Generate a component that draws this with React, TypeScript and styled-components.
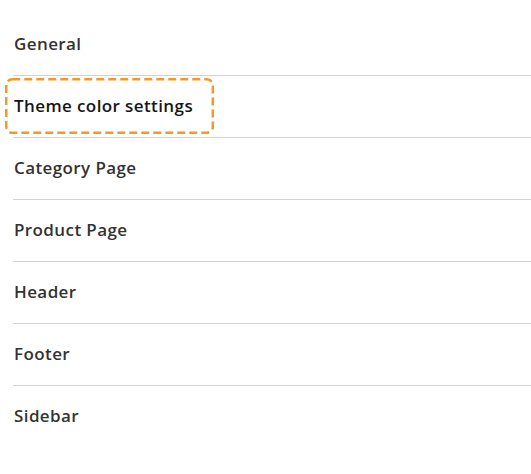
import { createGlobalStyle } from "styled-components";
import styled from "styled-components";

const GlobalStyle = createGlobalStyle`
  body {
    margin: 0;
    background: #fff;
    font-family: "Open Sans", "Noto Sans", sans-serif;
  }
`;

const Menu = styled.nav`
  padding: 14px 0 0 13px;
  width: 531px;
  box-sizing: border-box;
`;

const Row = styled.div<{ $last?: boolean }>`
  display: flex;
  align-items: center;
  height: 59px;
  padding-bottom: 2px;
  border-bottom: 1px solid ${(p) => (p.$last ? "transparent" : "#d3d3d3")};
`;

const Label = styled.span<{ $focused?: boolean }>`
  position: relative;
  font-size: 17px;
  font-weight: 600;
  letter-spacing: 0.4px;
  line-height: 24px;
  color: ${(p) => (p.$focused ? "#161616" : "#333")};
  margin-left: 1px;
  ${(p) =>
    p.$focused &&
    `
    margin-left: -8px;
    padding: 16px 21px 16px 9px;
  `}
`;

// dashed focus ring drawn over the label
const FocusRing = styled.svg`
  position: absolute;
  inset: 0;
  width: 100%;
  height: 100%;
  overflow: visible;
  pointer-events: none;
`;

const items = [
  "General",
  "Theme color settings",
  "Category Page",
  "Product Page",
  "Header",
  "Footer",
  "Sidebar",
];

export default function App() {
  return (
    <>
      <GlobalStyle />
      <Menu>
        {items.map((item, i) => (
          <Row key={item} $last={i === items.length - 1}>
            <Label $focused={i === 1}>
              {item}
              {i === 1 && (
                <FocusRing>
                  <rect
                    x="1.25"
                    y="1.25"
                    width="calc(100% - 2.5px)"
                    height="calc(100% - 2.5px)"
                    rx="6"
                    fill="none"
                    stroke="#f3982c"
                    strokeWidth="2.5"
                    strokeDasharray="8 4"
                  />
                </FocusRing>
              )}
            </Label>
          </Row>
        ))}
      </Menu>
    </>
  );
}
